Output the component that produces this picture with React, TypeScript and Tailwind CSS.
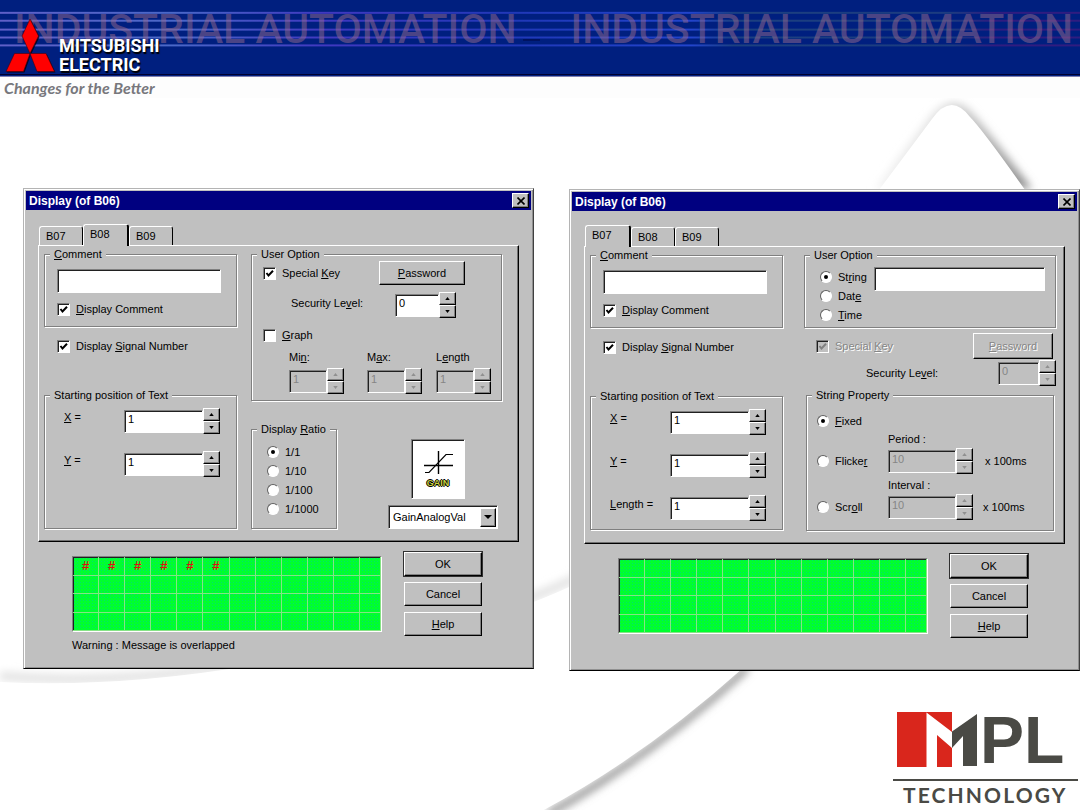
import type { ReactNode } from "react";

const raised =
  "border border-t-white border-l-white border-r-black border-b-black shadow-[inset_-1px_-1px_0_#808080]";
const sunken =
  "border border-t-[#808080] border-l-[#808080] border-r-white border-b-white shadow-[inset_1px_1px_0_#202020]";
const dimText = "text-[#868686] [text-shadow:1px_1px_0_#fff]";

function Group({ title, className, body, children }: { title: ReactNode; className?: string; body?: string; children: ReactNode }) {
  return (
    <fieldset
      className={`min-w-0 border border-[#808080] shadow-[1px_1px_0_#fff,inset_1px_1px_0_#fff] ${className ?? ""}`}
    >
      <legend className="ml-[5px] h-3.5 bg-[#c0c0c0] px-1">{title}</legend>
      <div className={body}>{children}</div>
    </fieldset>
  );
}

function Check({ checked, disabled, children }: { checked?: boolean; disabled?: boolean; children: ReactNode }) {
  return (
    <label className={`flex h-3.5 items-center gap-1.5 ${disabled ? dimText : ""}`}>
      <span className="grid">
        <input
          type="checkbox"
          defaultChecked={checked}
          disabled={disabled}
          className={`peer col-start-1 row-start-1 size-[13px] appearance-none bg-white disabled:bg-[#c0c0c0] ${sunken}`}
        />
        <svg
          viewBox="0 0 13 13"
          className="pointer-events-none invisible col-start-1 row-start-1 size-[13px] text-black peer-checked:visible peer-disabled:text-[#808080]"
        >
          <path d="M3.5 6 L5.5 8.5 L10 3.8" fill="none" stroke="currentColor" strokeWidth="2" />
        </svg>
      </span>
      <span>{children}</span>
    </label>
  );
}

function Radio({ name, checked, className, children }: { name: string; checked?: boolean; className?: string; children: ReactNode }) {
  return (
    <label className={`flex items-center gap-1.5 ${className ?? ""}`}>
      <span className="grid place-items-center">
        <input
          type="radio"
          name={name}
          defaultChecked={checked}
          className="peer col-start-1 row-start-1 size-3 appearance-none rounded-full border border-t-[#606060] border-l-[#606060] border-r-white border-b-white bg-white"
        />
        <span className="pointer-events-none invisible col-start-1 row-start-1 size-1 rounded-full bg-black peer-checked:visible" />
      </span>
      <span>{children}</span>
    </label>
  );
}

function Arrow({ down }: { down?: boolean }) {
  return (
    <svg viewBox="0 0 6 4" className="h-[3px] w-[5px]">
      <path d={down ? "M0 0 H6 L3 4 Z" : "M0 4 H6 L3 0 Z"} fill="currentColor" />
    </svg>
  );
}

function Spin({ id, value, disabled, className }: { id: string; value: string; disabled?: boolean; className: string }) {
  const step = `flex flex-1 items-center justify-center bg-[#c0c0c0] disabled:text-[#909090] ${raised}`;
  return (
    <span className={`flex h-[26px] items-center ${className}`}>
      <input
        id={id}
        defaultValue={value}
        disabled={disabled}
        className={`h-[23px] w-0 min-w-0 flex-1 bg-white pb-1 pl-[3px] disabled:bg-[#c0c0c0] disabled:text-[#868686] ${sunken}`}
      />
      <span className="flex h-full w-[17px] flex-col">
        <button type="button" aria-label="Up" disabled={disabled} className={step}>
          <Arrow />
        </button>
        <button type="button" aria-label="Down" disabled={disabled} className={step}>
          <Arrow down />
        </button>
      </span>
    </span>
  );
}

function PushButton({ main, disabled, className, children }: { main?: boolean; disabled?: boolean; className: string; children: ReactNode }) {
  return (
    <button
      type="button"
      disabled={disabled}
      className={`bg-[#c0c0c0] ${raised} ${main ? "outline outline-[#303030]" : ""} ${disabled ? dimText : ""} ${className}`}
    >
      {children}
    </button>
  );
}

function Tabs({ active }: { active: string }) {
  return (
    <div role="tablist" className="flex h-[22px] items-end pl-px">
      {["B07", "B08", "B09"].map((t) => (
        <button
          key={t}
          type="button"
          role="tab"
          aria-selected={t === active}
          className={`w-11 rounded-t-[3px] border-t border-l border-t-white border-l-white border-r-black bg-[#c0c0c0] pl-1.5 text-left ${
            t === active ? "z-10 h-[22px] w-[46px] border-r-2 pb-1" : "mb-px h-[19px] border-r"
          }`}
        >
          {t}
        </button>
      ))}
    </div>
  );
}

function Lcd({ marks }: { marks: number }) {
  return (
    <div
      className={`grid h-[76px] w-[310px] grid-cols-[repeat(11,26fr)_21fr] grid-rows-4 overflow-hidden bg-[#00ff2e] bg-[radial-gradient(#00e070_1px,transparent_1px)] bg-[size:3px_3px] ${sunken}`}
    >
      {Array.from({ length: 48 }, (_, i) => (
        <span
          key={i}
          className="border-r border-b border-[#86e486] text-center font-['Liberation_Mono',monospace] text-[13px] leading-[19px] font-bold text-[#e01010]"
        >
          {i < marks ? "#" : ""}
        </span>
      ))}
    </div>
  );
}

function Dialog({ active, marks, warning, left, right, className }: { active: string; marks: number; warning?: string; left: ReactNode; right: ReactNode; className?: string }) {
  return (
    <section
      className={`min-w-0 border border-t-[#b4b4b4] border-l-[#b4b4b4] border-r-[#404040] border-b-black bg-[#c0c0c0] p-0.5 shadow-[inset_1px_1px_0_#fff,inset_-1px_-1px_0_#909090] ${className ?? ""}`}
    >
      <header className="flex h-[19px] items-center justify-between bg-[#000080] pr-0.5 pl-[3px] text-white">
        <h2 className="text-[12px] font-bold">Display (of B06)</h2>
        <button type="button" aria-label="Close" className={`flex h-[15px] w-[17px] items-center justify-center bg-[#c0c0c0] ${raised}`}>
          <svg viewBox="0 0 8 8" className="size-2">
            <path d="M0.5 0.5 L7.5 7.5 M7.5 0.5 L0.5 7.5" stroke="#000" strokeWidth="1.6" />
          </svg>
        </button>
      </header>
      <div className="px-3 pt-3.5 pb-3">
        <Tabs active={active} />
        <div className="-mt-px flex border border-t-white border-l-white border-r-black border-b-black pt-px pb-3 pl-[5px] shadow-[inset_-1px_-1px_0_#707070]">
          <div className="w-[193px] shrink-0">{left}</div>
          <div className="min-w-0 flex-1">{right}</div>
        </div>
        <div className="flex items-start pt-2.5 pl-[34px]">
          <div className="pt-1">
            <Lcd marks={marks} />
            <p className="mt-1.5 min-h-4">{warning}</p>
          </div>
          <div className="ml-[22px] flex flex-col gap-1.5">
            <PushButton main className="h-6 w-[78px]">OK</PushButton>
            <PushButton className="h-6 w-[78px]">Cancel</PushButton>
            <PushButton className="h-6 w-[78px]">
              <u>H</u>elp
            </PushButton>
          </div>
        </div>
      </div>
    </section>
  );
}

function TextSettings({ id, withLength }: { id: string; withLength?: boolean }) {
  return (
    <>
      <Group
        title={
          <label htmlFor={`${id}-comment`}>
            <u>C</u>omment
          </label>
        }
        body="px-3 pt-2 pb-2.5"
      >
        <input id={`${id}-comment`} className={`mb-[9px] block h-6 w-[164px] bg-white px-1 ${sunken}`} />
        <Check checked>
          <u>D</u>isplay Comment
        </Check>
      </Group>
      <div className="pt-3 pl-[13px]">
        <Check checked>
          Display <u>S</u>ignal Number
        </Check>
      </div>
      <Group title="Starting position of Text" className="mt-[35px] h-[141px]" body="flex flex-col gap-[17px] pt-1.5 pl-[19px]">
        <div className="flex">
          <label htmlFor={`${id}-x`} className="w-[60px] pt-0.5">
            <u>X</u> =
          </label>
          <Spin id={`${id}-x`} value="1" className="w-24" />
        </div>
        <div className="flex">
          <label htmlFor={`${id}-y`} className="w-[60px] pt-0.5">
            <u>Y</u> =
          </label>
          <Spin id={`${id}-y`} value="1" className="w-24" />
        </div>
        {withLength && (
          <div className="flex">
            <label htmlFor={`${id}-len`} className="w-[60px] pt-0.5">
              <u>L</u>ength =
            </label>
            <Spin id={`${id}-len`} value="1" className="w-24" />
          </div>
        )}
      </Group>
    </>
  );
}

function GraphOptions() {
  return (
    <div className="pr-4 pl-3.5">
      <Group title="User Option" body="pb-1.5 pl-[11px]">
        <div className="flex items-center justify-between pr-9">
          <Check checked>
            Special <u>K</u>ey
          </Check>
          <PushButton className="h-6 w-[86px]">
            <u>P</u>assword
          </PushButton>
        </div>
        <div className="mt-[7px] flex items-center pl-7">
          <label htmlFor="a-sec" className="w-[104px] pb-1">
            Security Le<u>v</u>el:
          </label>
          <Spin id="a-sec" value="0" className="w-[61px]" />
        </div>
        <div className="mt-2.5">
          <Check>
            <u>G</u>raph
          </Check>
        </div>
        <div className="mt-2 grid grid-cols-[78px_69px_55px] gap-y-1 pl-[26px]">
          <label htmlFor="a-min" className="h-3.5">
            Mi<u>n</u>:
          </label>
          <label htmlFor="a-max">
            M<u>a</u>x:
          </label>
          <label htmlFor="a-length">
            L<u>e</u>ngth
          </label>
          <Spin id="a-min" value="1" disabled className="w-[55px]" />
          <Spin id="a-max" value="1" disabled className="w-[55px]" />
          <Spin id="a-length" value="1" disabled className="w-[55px]" />
        </div>
      </Group>
      <div className="mt-[21px] flex items-end justify-between pr-1">
        <Group
          title={
            <>
              Display <u>R</u>atio
            </>
          }
          className="w-[86px]"
          body="pt-1.5 pb-2.5"
        >
          {["1/1", "1/10", "1/100", "1/1000"].map((r, i) => (
            <Radio key={r} name="ratio" checked={i === 0} className="h-[19px] pl-[15px]">
              {r}
            </Radio>
          ))}
        </Group>
        <div className="w-[110px]">
          <figure className={`ml-[23px] flex h-[60px] w-[54px] flex-col items-center bg-white pt-2.5 ${sunken}`}>
            <svg viewBox="0 0 30 25" className="h-[25px] w-[30px]" fill="none" stroke="#000">
              <path d="M15.5 1 V24 M1 15.5 H30" strokeWidth="1.4" />
              <path d="M2 22.5 H6 L23 4.5 H30" strokeWidth="1.2" />
            </svg>
            <figcaption className="pt-0.5 text-[9px] leading-3 font-bold text-[#c8d040] [text-shadow:1px_0_0_#000,-1px_0_0_#000,0_1px_0_#000,0_-1px_0_#000]">
              GAIN
            </figcaption>
          </figure>
          <div className={`mt-1.5 grid h-6 items-center bg-white p-px ${sunken}`}>
            <select aria-label="Gain" className="col-start-1 row-start-1 w-full appearance-none pl-[3px] outline-none">
              <option>GainAnalogVal</option>
            </select>
            <span className={`pointer-events-none col-start-1 row-start-1 flex h-[19px] w-4 items-center justify-center justify-self-end bg-[#c0c0c0] ${raised}`}>
              <svg viewBox="0 0 8 4" className="h-1 w-2">
                <path d="M0 0 H8 L4 4 Z" />
              </svg>
            </span>
          </div>
        </div>
      </div>
    </div>
  );
}

function StringOptions() {
  return (
    <div className="pr-2 pl-[21px]">
      <Group title="User Option" body="flex pt-[5px] pr-2.5 pb-[3px] pl-[15px]">
        <div className="flex w-[54px] shrink-0 flex-col">
          <Radio name="kind" checked className="h-[19px]">
            St<u>r</u>ing
          </Radio>
          <Radio name="kind" className="h-[19px]">
            Dat<u>e</u>
          </Radio>
          <Radio name="kind" className="h-[19px]">
            <u>T</u>ime
          </Radio>
        </div>
        <input aria-label="String" className={`h-6 w-0 min-w-0 flex-1 bg-white px-1 ${sunken}`} />
      </Group>
      <div className="mt-[5px] flex items-center justify-between pr-[3px] pl-3">
        <Check checked disabled>
          Special <u>K</u>ey
        </Check>
        <PushButton disabled className="h-[26px] w-20">
          <u>P</u>assword
        </PushButton>
      </div>
      <div className="mt-px flex items-center justify-end">
        <label htmlFor="b-sec" className="w-[132px]">
          Security Le<u>v</u>el:
        </label>
        <Spin id="b-sec" value="0" disabled className="w-[58px]" />
      </div>
      <Group title="String Property" className="mt-0.5 mr-0.5 ml-0.5" body="pt-3 pb-2.5 pl-2.5">
        <Radio name="prop" checked className="h-3.5">
          <u>F</u>ixed
        </Radio>
        <label htmlFor="b-period" className="mt-1 block h-4 pl-[71px]">
          Period :
        </label>
        <div className="flex items-center">
          <Radio name="prop" className="w-[71px]">
            Flicke<u>r</u>
          </Radio>
          <Spin id="b-period" value="10" disabled className="w-[85px]" />
          <span className="pl-3">x 100ms</span>
        </div>
        <label htmlFor="b-interval" className="mt-1 block h-4 pl-[71px]">
          Interval :
        </label>
        <div className="flex items-center">
          <Radio name="prop" className="w-[71px]">
            Scr<u>o</u>ll
          </Radio>
          <Spin id="b-interval" value="10" disabled className="w-[85px]" />
          <span className="pl-2.5">x 100ms</span>
        </div>
      </Group>
    </div>
  );
}

function Backdrop() {
  return (
    <svg viewBox="0 0 1080 810" preserveAspectRatio="none" className="pointer-events-none absolute inset-0 size-full">
      <defs>
        <filter id="soft" x="-10%" y="-10%" width="120%" height="120%">
          <feGaussianBlur stdDeviation="4" />
        </filter>
        <linearGradient id="peak" x1="0" x2="1" y1="0" y2="0">
          <stop offset="0" stopColor="#f4f4f4" />
          <stop offset="0.45" stopColor="#dedede" />
          <stop offset="1" stopColor="#868686" />
        </linearGradient>
      </defs>
      <rect width="1080" height="810" fill="#fff" />
      <path d="M873 190 L928 118 Q950 90 972 116 Q980 124 1030 190 Z" fill="url(#peak)" filter="url(#soft)" transform="translate(2 -1)" />
      <path d="M876 194 L932 119 Q951 92 970 117 Q982 129 1028 194 Z" fill="#fff" />
      <path d="M0 676 Q120 686 250 662 Q450 640 580 576" fill="none" stroke="#e0e0e0" strokeWidth="8" filter="url(#soft)" />
      <path d="M0 682 Q120 688 260 664 Q450 644 580 582 L580 810 H0 Z" fill="#fff" />
      <path d="M747 668 Q650 757 548 814" fill="none" stroke="#909090" strokeWidth="7" filter="url(#soft)" />
      <path d="M743 668 Q644 757 540 812 L480 812 L700 668 Z" fill="#fff" />
    </svg>
  );
}

function Banner() {
  return (
    <header className="relative h-[77px] overflow-hidden border-b border-[#8080b0] bg-[#001f7f]">
      <svg viewBox="0 0 1080 77" preserveAspectRatio="none" className="absolute inset-0 size-full">
        <defs>
          <linearGradient id="stripe" gradientUnits="userSpaceOnUse" x1="0" x2="1080" y1="0" y2="0">
            <stop offset="0" stopColor="#5f5fc8" />
            <stop offset="0.16" stopColor="#4a68c8" />
            <stop offset="0.3" stopColor="#4038c0" />
            <stop offset="0.48" stopColor="#2038b8" />
            <stop offset="0.64" stopColor="#2244cc" />
            <stop offset="0.68" stopColor="#1c4080" />
            <stop offset="0.88" stopColor="#1c3c80" />
            <stop offset="0.92" stopColor="#301c80" />
            <stop offset="1" stopColor="#301c80" />
          </linearGradient>
        </defs>
        {[12, 20, 29, 37, 45].map((y) => (
          <rect key={y} x="0" y={y} width="1080" height="2" fill="url(#stripe)" />
        ))}
        <rect x="523" y="40" width="17" height="1" fill="#000840" />
        <rect x="0" y="75" width="1080" height="1" fill="#000030" />
      </svg>
      <div className="absolute top-1 left-3.5 flex gap-[54px] font-[Roboto,sans-serif] text-[41px] leading-[50px] font-medium whitespace-nowrap text-[rgba(150,105,140,0.5)]">
        <span>INDUSTRIAL AUTOMATION</span>
        <span>INDUSTRIAL AUTOMATION</span>
      </div>
      <div className="relative flex items-end pt-[18px] pl-1">
        <svg viewBox="0 0 54 56" className="h-14 w-[54px]">
          <g fill="#000" opacity="0.7" transform="translate(1 1)">
            <path d="M26 1 L34.5 18 L26 35.5 L18 18 Z M10.5 35.5 H26 L19.5 53.5 H2 Z M26 35.5 H42 L50.5 53.5 H33 Z" />
          </g>
          <path
            d="M26 1 L34.5 18 L26 35.5 L18 18 Z M10.5 35.5 H26 L19.5 53.5 H2 Z M26 35.5 H42 L50.5 53.5 H33 Z"
            fill="#f00"
            stroke="#400010"
            strokeWidth="0.6"
          />
        </svg>
        <p className="pl-px font-[Roboto,sans-serif] text-[18px] leading-[19px] font-bold text-white [text-shadow:1px_2px_1px_#000]">
          MITSUBISHI
          <br />
          ELECTRIC
        </p>
      </div>
    </header>
  );
}

function MplLogo() {
  return (
    <div className="w-[185px] text-[#4a4a45]">
      <div className="flex h-[58px] items-center gap-0.5 pl-1">
        <svg viewBox="0 0 81 56" className="h-14 w-[81px]">
          <rect x="0" y="0" width="55" height="55" fill="#d9261c" />
          <path d="M29.5 0.5 L55 20 V36 L40 23 V55 H29.5 Z" fill="#fff" />
          <path d="M55 19.5 L80 2 V54 H66 V24 L55 36 Z" fill="#4a4a45" />
        </svg>
        <span className="font-['Liberation_Sans',sans-serif] text-[66px] leading-[56px] font-bold">PL</span>
      </div>
      <div className="mt-2.5 h-0.5 bg-[#4a4a45]" />
      <p className="pt-1 pb-[5px] pl-2.5 font-[Lato,sans-serif] text-[21px] leading-5 font-bold tracking-widest">TECHNOLOGY</p>
    </div>
  );
}

export default function App() {
  return (
    <div className="relative flex min-h-screen flex-col overflow-hidden bg-white font-['Liberation_Sans',Arial,sans-serif] text-[11px] leading-[14px] text-black">
      <Backdrop />
      <Banner />
      <p className="relative h-[21px] bg-[#fdfdfd] pl-1 font-[Lato,sans-serif] text-[16px] leading-[21px] font-bold text-[#77777c] italic">
        Changes for the Better
      </p>
      <main className="relative grid grid-cols-2 items-start gap-[35px] pt-[90px] pl-[23px]">
        <Dialog
          active="B08"
          marks={6}
          warning="Warning : Message is overlapped"
          left={<TextSettings id="a" />}
          right={<GraphOptions />}
        />
        <Dialog active="B07" marks={0} className="mt-px" left={<TextSettings id="b" withLength />} right={<StringOptions />} />
      </main>
      <footer className="relative mt-auto flex justify-end pr-0.5">
        <MplLogo />
      </footer>
    </div>
  );
}
